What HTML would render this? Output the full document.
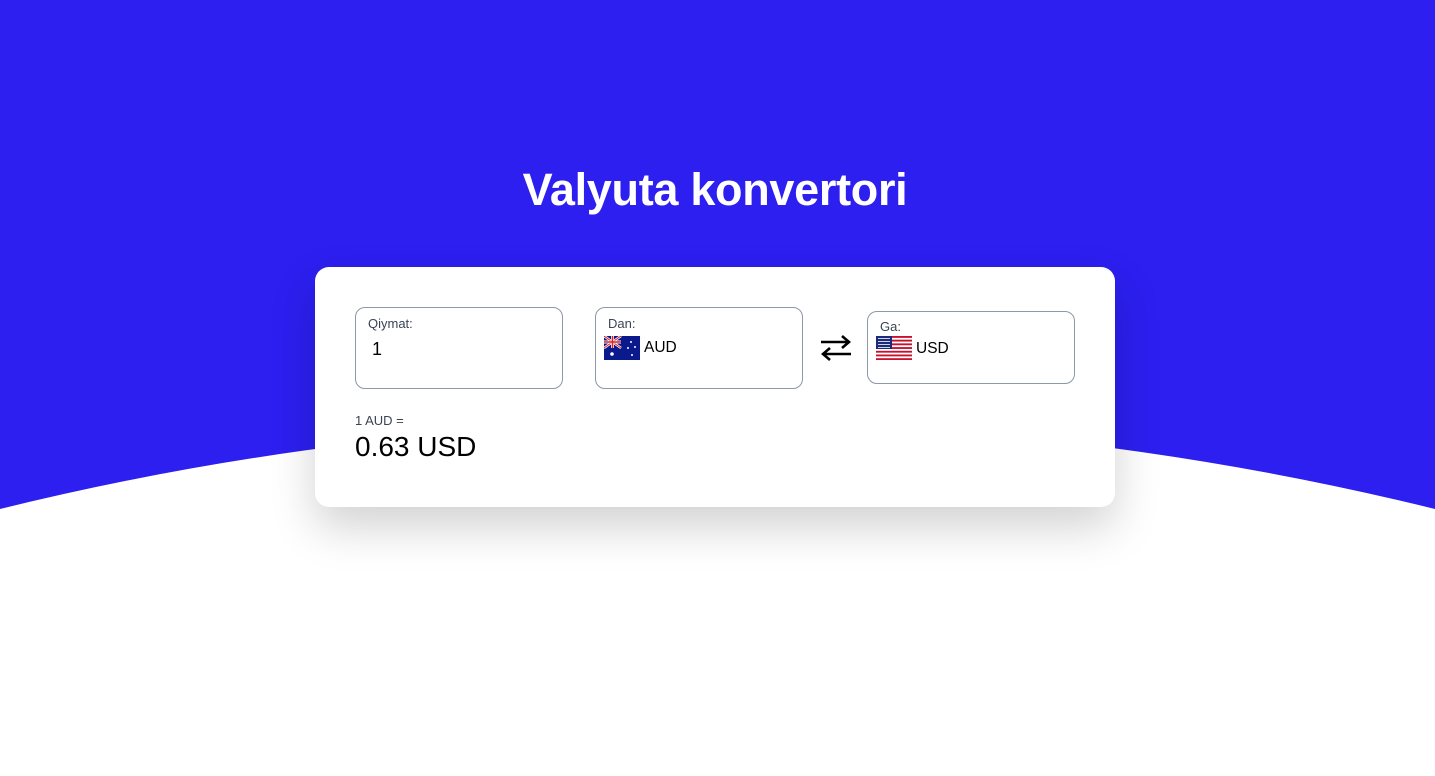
<!DOCTYPE html>
<html><head><style>
body{margin:0;width:1435px;height:776px;background:#fff;font-family:"Liberation Sans",sans-serif;position:relative;overflow:hidden}
svg.bg{position:absolute;left:0;top:0}
h1{position:absolute;left:0;width:1430px;top:160px;margin:0;text-align:center;color:#fff;font-size:45px;font-weight:bold;line-height:60px;letter-spacing:-0.3px}
.card{position:absolute;left:315px;top:267px;width:800px;height:240px;background:#fff;border-radius:14px;box-shadow:0 20px 45px rgba(0,0,0,0.18)}
.box{position:absolute;border:1px solid #8d98a8;border-radius:10px;background:#fff;box-sizing:border-box}
.lbl{position:absolute;font-size:13px;color:#3a4456}
.val{position:absolute;font-size:16px;color:#000}
</style></head><body>
<svg class="bg" width="1435" height="776"><path d="M0,0 H1435 V509 A3000 3000 0 0 0 0 509 Z" fill="#2c1ff0"/></svg>
<h1>Valyuta konvertori</h1>
<div class="card">
 <div class="box" style="left:40px;top:40px;width:208px;height:82px">
  <div class="lbl" style="left:12px;top:8px">Qiymat:</div>
  <div class="val" style="left:16px;top:31px;font-size:18px">1</div>
 </div>
 <div class="box" style="left:280px;top:40px;width:208px;height:82px">
  <div class="lbl" style="left:12px;top:8px">Dan:</div>
  <svg style="position:absolute;left:8px;top:28px" width="36" height="24" viewBox="0 0 36 24">
   <rect width="36" height="24" fill="#0a1a8c"/>
   <path d="M0,0L17,12M17,0L0,12" stroke="#fff" stroke-width="2.5"/>
   <path d="M0,0L17,12M17,0L0,12" stroke="#d22" stroke-width="1"/>
   <path d="M8.5,0V12M0,6H17" stroke="#fff" stroke-width="3"/>
   <path d="M8.5,0V12M0,6H17" stroke="#d22" stroke-width="1.6"/>
   <circle cx="8" cy="18" r="1.8" fill="#fff"/><circle cx="27" cy="6" r="1" fill="#fff"/><circle cx="31" cy="11" r="1" fill="#fff"/><circle cx="24" cy="12" r="1" fill="#fff"/><circle cx="28" cy="19" r="1" fill="#fff"/>
  </svg>
  <div class="val" style="left:48px;top:31px;font-size:15.5px">AUD</div>
 </div>
 <svg style="position:absolute;left:505px;top:68px" width="32" height="26" viewBox="0 0 32 26">
  <path d="M1,7H29M22,1L29,7L22,13M31,19H3M10,13L3,19L10,25" fill="none" stroke="#000" stroke-width="2.6"/>
 </svg>
 <div class="box" style="left:552px;top:44px;width:208px;height:73px">
  <div class="lbl" style="left:12px;top:7px">Ga:</div>
  <svg style="position:absolute;left:8px;top:24px" width="36" height="24" viewBox="0 0 36 24">
   <rect width="36" height="24" fill="#fff"/>
   <g fill="#c8102e"><rect y="0" width="36" height="1.85"/><rect y="3.7" width="36" height="1.85"/><rect y="7.4" width="36" height="1.85"/><rect y="11.1" width="36" height="1.85"/><rect y="14.8" width="36" height="1.85"/><rect y="18.5" width="36" height="1.85"/><rect y="22.2" width="36" height="1.8"/></g>
   <rect width="16" height="13" fill="#1b2a7a"/>
   <g fill="#fff" opacity=".8"><rect x="2" y="2" width="12" height="1"/><rect x="2" y="5" width="12" height="1"/><rect x="2" y="8" width="12" height="1"/><rect x="2" y="11" width="12" height="1"/></g>
  </svg>
  <div class="val" style="left:48px;top:28px;font-size:15.5px">USD</div>
 </div>
 <div class="lbl" style="left:40px;top:146px;font-size:13px">1 AUD =</div>
 <div style="position:absolute;left:40px;top:164px;font-size:28px;color:#000">0.63 USD</div>
</div>
</body></html>
